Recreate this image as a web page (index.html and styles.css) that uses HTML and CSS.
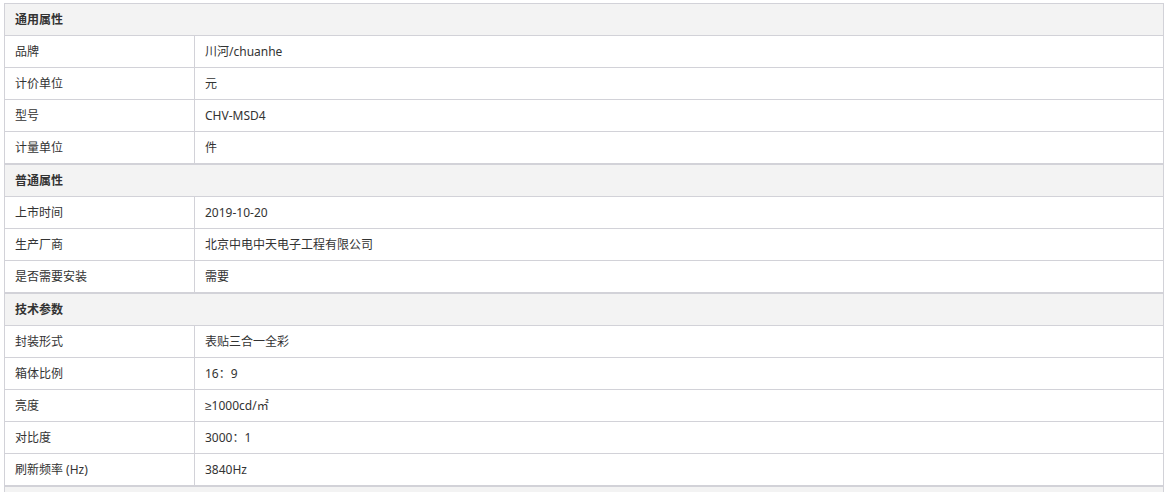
FILE: index.html
```html
<!DOCTYPE html>
<html lang="zh-CN">
<head>
<meta charset="utf-8">
<title>商品属性</title>
<link rel="stylesheet" href="styles.css">
</head>
<body>
<div class="wrap">
  <section class="group">
    <div class="group-title">通用属性</div>
    <div class="row"><div class="key">品牌</div><div class="val">川河/chuanhe</div></div>
    <div class="row"><div class="key">计价单位</div><div class="val">元</div></div>
    <div class="row"><div class="key">型号</div><div class="val">CHV-MSD4</div></div>
    <div class="row"><div class="key">计量单位</div><div class="val">件</div></div>
  </section>
  <section class="group">
    <div class="group-title">普通属性</div>
    <div class="row"><div class="key">上市时间</div><div class="val">2019-10-20</div></div>
    <div class="row"><div class="key">生产厂商</div><div class="val">北京中电中天电子工程有限公司</div></div>
    <div class="row"><div class="key">是否需要安装</div><div class="val">需要</div></div>
  </section>
  <section class="group">
    <div class="group-title">技术参数</div>
    <div class="row"><div class="key">封装形式</div><div class="val">表贴三合一全彩</div></div>
    <div class="row"><div class="key">箱体比例</div><div class="val">16：9</div></div>
    <div class="row"><div class="key">亮度</div><div class="val"><span class="sym">≥</span>1000cd/㎡</div></div>
    <div class="row"><div class="key">对比度</div><div class="val">3000：1</div></div>
    <div class="row"><div class="key">刷新频率 (Hz)</div><div class="val">3840Hz</div></div>
  </section>
  <section class="group">
    <div class="group-title"></div>
  </section>
</div>
</body>
</html>
```

FILE: styles.css
```css
html, body {
  margin: 0;
  padding: 0;
  background: #ffffff;
}
body {
  font-family: "Noto Sans", "Noto Sans CJK SC", sans-serif;
  font-size: 12px;
  color: #333333;
}
.wrap {
  padding: 3px 5px 0 4px;
  display: flex;
  flex-direction: column;
}
.group {
  border: 1px solid #d2d2d8;
}
.group-title {
  height: 31px;
  line-height: 31px;
  padding-left: 10px;
  background: #f3f3f3;
  font-weight: bold;
  color: #333333;
}
.row {
  display: grid;
  grid-template-columns: 190px 1fr;
  height: 32px;
  border-top: 1px solid #d2d2d8;
  box-sizing: border-box;
}
.key, .val {
  line-height: 31px;
  padding-left: 10px;
  white-space: nowrap;
}
.key {
  border-right: 1px solid #d2d2d8;
}
.sym {
  font-family: "Liberation Sans", "DejaVu Sans", sans-serif;
}
```
